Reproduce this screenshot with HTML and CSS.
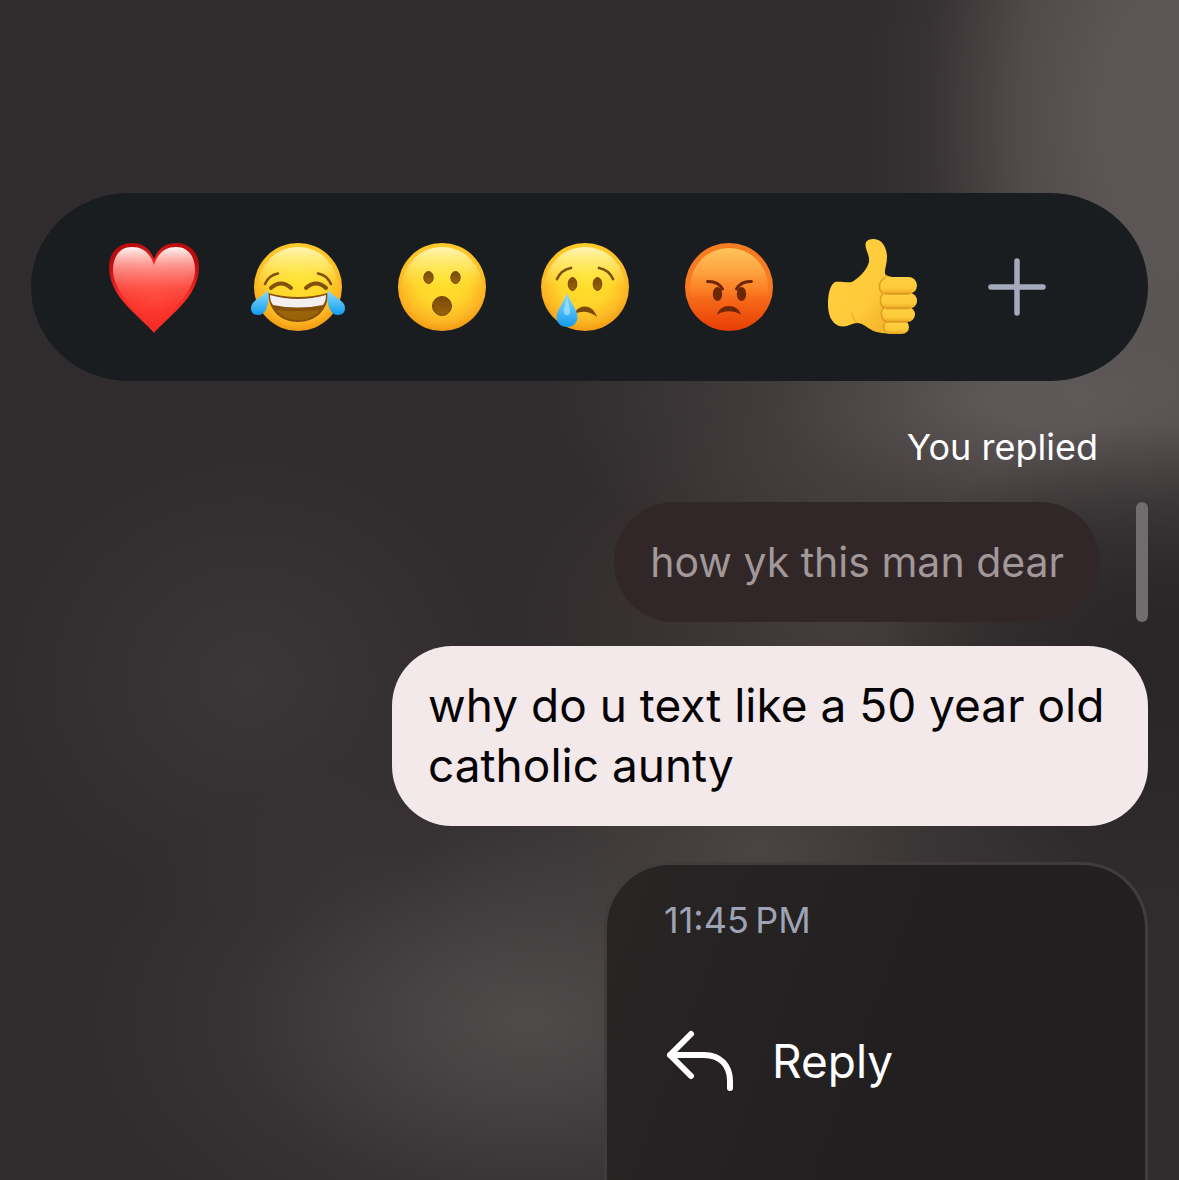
FILE: index.html
```html
<!DOCTYPE html>
<html lang="en">
<head>
  <meta charset="UTF-8">
  <meta name="viewport" content="width=device-width, initial-scale=1">
  <title>Message reactions</title>
  <link rel="stylesheet" href="styles.css">
</head>
<body>
  <!-- Gradients shared by the emoji -->
  <svg class="defs" width="0" height="0" aria-hidden="true">
    <defs>
      <radialGradient id="face" cx="50%" cy="40%" r="62%">
        <stop offset="0" stop-color="#ffe22c"/>
        <stop offset="0.5" stop-color="#ffd52b"/>
        <stop offset="0.8" stop-color="#fcb624"/>
        <stop offset="1" stop-color="#f0940f"/>
      </radialGradient>
      <linearGradient id="shine" x1="0" y1="0" x2="0" y2="1">
        <stop offset="0" stop-color="#fffbd0" stop-opacity="0.85"/>
        <stop offset="0.25" stop-color="#fff48c" stop-opacity="0.5"/>
        <stop offset="0.5" stop-color="#ffec50" stop-opacity="0"/>
      </linearGradient>
      <linearGradient id="angry" x1="0" y1="0" x2="0" y2="1">
        <stop offset="0" stop-color="#f47c22"/>
        <stop offset="0.5" stop-color="#fb7a20"/>
        <stop offset="1" stop-color="#e83d05"/>
      </linearGradient>
      <linearGradient id="angryShine" x1="0" y1="0" x2="0" y2="1">
        <stop offset="0" stop-color="#ffc55a"/>
        <stop offset="0.3" stop-color="#ffae48" stop-opacity="0.8"/>
        <stop offset="0.65" stop-color="#ff8f35" stop-opacity="0"/>
      </linearGradient>
      <radialGradient id="heart" cx="50%" cy="60%" r="62%">
        <stop offset="0" stop-color="#ff4032"/>
        <stop offset="0.6" stop-color="#f52a25"/>
        <stop offset="1" stop-color="#bb0b0c"/>
      </radialGradient>
      <linearGradient id="heartShine" x1="0" y1="0" x2="0" y2="1">
        <stop offset="0" stop-color="#fff4f2"/>
        <stop offset="0.25" stop-color="#ffa69e" stop-opacity="0.9"/>
        <stop offset="0.6" stop-color="#ff5a4f" stop-opacity="0.7"/>
        <stop offset="1" stop-color="#ff4034" stop-opacity="0"/>
      </linearGradient>
      <linearGradient id="tear" x1="0" y1="0" x2="0" y2="1">
        <stop offset="0" stop-color="#8fdcff"/>
        <stop offset="0.5" stop-color="#4fbdf8"/>
        <stop offset="1" stop-color="#139aec"/>
      </linearGradient>
      <linearGradient id="eye" x1="0" y1="0" x2="0" y2="1">
        <stop offset="0" stop-color="#7a4a08"/>
        <stop offset="1" stop-color="#98640a"/>
      </linearGradient>
      <linearGradient id="hand" x1="0" y1="0" x2="1" y2="1">
        <stop offset="0" stop-color="#ffd23f"/>
        <stop offset="0.6" stop-color="#fec93a"/>
        <stop offset="1" stop-color="#f0a920"/>
      </linearGradient>
      <linearGradient id="finger" x1="0" y1="0" x2="0" y2="1">
        <stop offset="0" stop-color="#ffd242"/>
        <stop offset="0.7" stop-color="#fdc838"/>
        <stop offset="1" stop-color="#e8a322"/>
      </linearGradient>
    </defs>
  </svg>

  <main class="thread">
    <div class="reactions" role="group" aria-label="Reactions">
      <button class="reaction" type="button" aria-label="Heart">
        <svg viewBox="0 0 96 96">
          <path fill="url(#heart)" d="M48 94C44 89 37 83 28 74C14 61 3 46 3 28C3 13 13 4 26 4C36 4 44 9 48 20C52 9 60 4 70 4C83 4 93 13 93 28C93 46 82 61 68 74C59 83 52 89 48 94Z"/>
          <path fill="url(#heartShine)" d="M7 31C7 17 14 8 26 8C37 8 44 14 48 26C52 14 59 8 70 8C82 8 89 17 89 31C89 46 76 62 64 74C54 80 42 80 32 74C20 62 7 46 7 31Z"/>
        </svg>
      </button>
      <button class="reaction" type="button" aria-label="Tears of joy">
        <svg viewBox="0 0 96 96">
          <circle cx="48" cy="48" r="44" fill="url(#face)"/>
          <circle cx="48" cy="48" r="40" fill="url(#shine)"/>
          <g fill="none" stroke="#81500b" stroke-linecap="round">
            <path stroke-width="2.6" d="M15 45Q19 36 28 34.500M81 45Q77 36 68 34.500"/>
            <path stroke-width="4" d="M21 49Q31 40 41 49M56 49Q66 40 76 49"/>
          </g>
          <path fill="#84500a" d="M18 54Q48 62 78 54C78 71 66 83 48 83C30 83 19 71 18 54Z"/>
          <path fill="#f1eff0" d="M20 56Q48 64 76 56Q76 62 73 66Q48 71 23 66Q20 62 20 56Z"/>
          <path fill="#996309" d="M26 71Q48 73 70 71Q62 81 48 81Q34 81 26 71Z"/>
          <path fill="url(#tear)" d="M18 51C20 62 17 76 8 76C3 76 1 73 1 69C1 61 12 59 18 51Z"/>
          <path fill="url(#tear)" d="M78 51C76 62 79 76 88 76C93 76 95 73 95 69C95 61 84 59 78 51Z"/>
        </svg>
      </button>
      <button class="reaction" type="button" aria-label="Surprised">
        <svg viewBox="0 0 96 96">
          <circle cx="48" cy="48" r="44" fill="url(#face)"/>
          <circle cx="48" cy="48" r="40" fill="url(#shine)"/>
          <g fill="url(#eye)" stroke="#75430a">
            <ellipse cx="34.500" cy="38.500" rx="4.700" ry="6"/>
            <ellipse cx="61.500" cy="38.500" rx="4.700" ry="6"/>
            <circle cx="48" cy="67" r="9.500"/>
          </g>
        </svg>
      </button>
      <button class="reaction" type="button" aria-label="Crying">
        <svg viewBox="0 0 96 96">
          <circle cx="48" cy="48" r="44" fill="url(#face)"/>
          <circle cx="48" cy="48" r="40" fill="url(#shine)"/>
          <g fill="none" stroke="#81500b" stroke-width="2.8" stroke-linecap="round">
            <path d="M20 40Q24 31 34 29M76 40Q72 31 62 29"/>
          </g>
          <g fill="url(#eye)" stroke="#75430a">
            <ellipse cx="35.500" cy="45" rx="4.300" ry="6.500"/>
            <ellipse cx="60.500" cy="45" rx="4.300" ry="6.500"/>
          </g>
          <path fill="#7b480a" d="M38 73C43 65 56 65 60 78C54 73 45 71 38 75Z"/>
          <path fill="url(#tear)" d="M30 54C33 63 40.500 71 40.500 78C40.500 84 36 88 30 88C24 88 19.500 84 19.500 78C19.500 71 27 63 30 54Z"/>
          <path fill="#b9ebff" opacity="0.6" d="M30 58C31 65 34 70 33 74C32 77 28 77 27 74C26 70 29 65 30 58Z"/>
        </svg>
      </button>
      <button class="reaction" type="button" aria-label="Angry">
        <svg viewBox="0 0 96 96">
          <circle cx="48" cy="48" r="44" fill="url(#angry)"/>
          <circle cx="48" cy="48" r="39" fill="url(#angryShine)"/>
          <g fill="#6d2606">
            <ellipse cx="36.500" cy="55" rx="4.700" ry="7"/>
            <ellipse cx="60.500" cy="55" rx="4.700" ry="7"/>
            <path d="M36 76C39 64 57 64 60 76C54 71 42 71 36 76Z"/>
          </g>
          <path fill="none" stroke="#6d2606" stroke-width="3" stroke-linecap="round" d="M26.500 42.500Q37 42 41.500 50M70.500 42.500Q60 42 55.500 50"/>
        </svg>
      </button>
      <button class="reaction" type="button" aria-label="Thumbs up">
        <svg viewBox="0 0 96 96">
          <path fill="url(#hand)" d="M10 43C15 42 22 44 27 43C34 39 42 31 44 23C45 16 40 11 40.500 5C41 1 45 0 49 0C57 0 62 9 62 18C62 27 58 33 61 36C64 38 69 38 75 39L76 94C65 95 52 95 45 90C40 87 37 84 32 84C27 84 22 89 14 87C6 84 3 75 3 65C3 55 5 46 10 43Z"/>
          <path fill="none" stroke="#dfa022" stroke-width="1.500" opacity="0.6" d="M60 37Q65 39 70 39M32 84Q28 80 27 74"/>
          <g fill="url(#finger)">
            <rect x="58" y="81" width="26" height="14" rx="7"/>
            <rect x="56" y="68" width="34" height="15" rx="7.500"/>
            <rect x="55" y="54" width="37" height="15.500" rx="7.500"/>
            <rect x="54" y="38" width="38" height="17" rx="8.500"/>
          </g>
          <path fill="none" stroke="#c98010" stroke-width="1.500" stroke-linecap="round" opacity="0.6" d="M60 39Q54 42 54.500 48Q55 53 58 55Q54 59 56 65Q57 68 59 69Q55 72 57 78Q58 81 61 83Q57 86 60 92M60 55H84M61 69.500H84M62 83H82"/>
        </svg>
      </button>
      <button class="reaction" type="button" aria-label="More reactions">
        <svg viewBox="0 0 96 96">
          <path class="plus" d="M22 48H74M48 22V74"/>
        </svg>
      </button>
    </div>

    <p class="reply-label">You replied</p>
    <div class="quote">
      <p class="quote-bubble">how yk this man dear</p>
      <span class="quote-bar"></span>
    </div>
    <p class="bubble">why do u text like a 50 year old catholic aunty</p>

    <div class="menu">
      <time class="menu-time" datetime="23:45">11:45&#8201;PM</time>
      <button class="menu-item" type="button">
        <svg class="menu-icon" viewBox="0 0 72 64" aria-hidden="true">
          <path d="M27 5L6 26L27 47M6 26H40C56 26 66 36 66 52V59"/>
        </svg>
        Reply
      </button>
    </div>
  </main>
</body>
</html>
```
FILE: styles.css
```css
* {
  box-sizing: border-box;
}

body {
  margin: 0;
  font-family: Inter, "Liberation Sans", sans-serif;
  color: #fff;
  /* blurred chat wallpaper */
  background:
    radial-gradient(ellipse 280px 240px at 1160px 660px, rgba(42, 38, 39, 0.95) 15%, rgba(42, 38, 39, 0.5) 60%, rgba(42, 38, 39, 0) 100%),
    radial-gradient(ellipse 500px 200px at 1040px 400px, rgba(96, 89, 89, 0.95) 10%, rgba(96, 89, 89, 0.35) 55%, rgba(96, 89, 89, 0) 100%),
    radial-gradient(ellipse 320px 540px at 1179px 120px, rgba(92, 85, 86, 1) 25%, rgba(92, 85, 86, 0.75) 50%, rgba(92, 85, 86, 0.15) 80%, rgba(92, 85, 86, 0) 100%),
    radial-gradient(ellipse 340px 220px at 840px 620px, rgba(74, 65, 65, 0.8), rgba(74, 65, 65, 0.3) 55%, rgba(74, 65, 65, 0) 100%),
    radial-gradient(ellipse 340px 220px at 760px 850px, rgba(76, 70, 70, 0.9), rgba(76, 70, 70, 0.3) 55%, rgba(76, 70, 70, 0) 100%),
    radial-gradient(ellipse 460px 280px at 530px 1020px, rgba(82, 77, 77, 0.95), rgba(82, 77, 77, 0.7) 25%, rgba(82, 77, 77, 0.2) 65%, rgba(82, 77, 77, 0) 100%),
    radial-gradient(ellipse 260px 240px at 250px 680px, rgba(60, 55, 56, 0.9), rgba(60, 55, 56, 0) 100%),
    #302b2c;
}

p {
  margin: 0;
}

button {
  padding: 0;
  border: none;
  background: none;
  color: inherit;
  font: inherit;
  cursor: pointer;
}

.defs {
  position: absolute;
}

.thread {
  display: flex;
  flex-direction: column;
  align-items: flex-end;
  min-height: 100vh;
  padding: 193px 31px 0;
}

/* Reaction bar */
.reactions {
  display: flex;
  justify-content: space-between;
  align-self: stretch;
  padding: 46px 83px 46px 75px;
  border-radius: 98px / 94px;
  background: #191d1f;
}

.reaction {
  width: 96px;
  height: 96px;
}

.reaction svg {
  display: block;
  width: 100%;
}

.plus {
  fill: none;
  stroke: #a4a9bb;
  stroke-width: 5.5;
  stroke-linecap: round;
}

/* Messages */
.reply-label {
  margin: 42px 50px 31px 0;
  font-size: 36px;
  line-height: 48px;
}

.quote {
  display: flex;
  gap: 36px;
}

.quote-bubble {
  padding: 30px 36px;
  border-radius: 60px;
  background: #312628;
  color: #a19899;
  font-size: 41px;
  line-height: 60px;
}

.quote-bar {
  width: 12px;
  border-radius: 6px;
  background: #716c6d;
}

.bubble {
  max-width: 756px;
  margin-top: 24px;
  padding: 29px 36px 31px;
  border-radius: 60px;
  background: #f3e8ea;
  color: #050303;
  font-size: 46px;
  line-height: 60px;
}

/* Context menu */
.menu {
  flex: 1;
  display: flex;
  flex-direction: column;
  align-items: flex-start;
  gap: 85px;
  width: 544px;
  margin-top: 36px;
  padding: 31px 57px 80px;
  border: 3px solid #413b3c;
  border-bottom: none;
  border-radius: 66px 66px 0 0;
  background: linear-gradient(110deg, #292525, #221f20 55%);
}

.menu-time {
  color: #9da3b4;
  font-size: 36px;
  line-height: 48px;
}

.menu-item {
  display: flex;
  align-items: center;
  gap: 36px;
  font-size: 46px;
  line-height: 60px;
}

.menu-icon {
  width: 72px;
  height: 64px;
  fill: none;
  stroke: #fff;
  stroke-width: 6;
  stroke-linecap: round;
  stroke-linejoin: round;
}
```
